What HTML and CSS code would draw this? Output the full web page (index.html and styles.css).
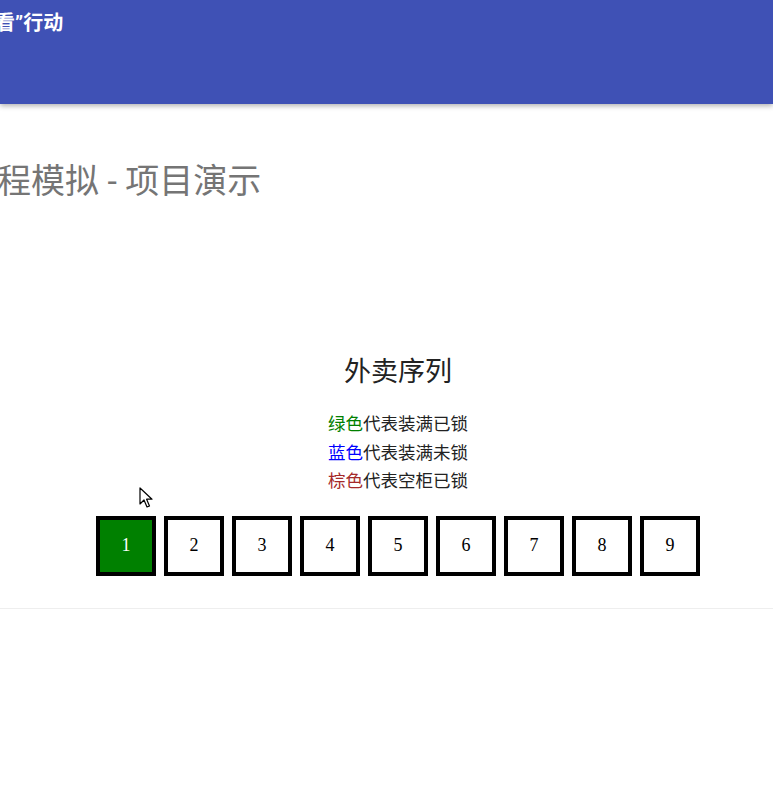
FILE: index.html
```html
<!DOCTYPE html>
<html lang="zh">
<head>
<meta charset="utf-8">
<link rel="stylesheet" href="styles.css">
</head>
<body>
<header class="appbar">
  <div class="appbar-title">“看”行动</div>
</header>
<main class="content">
  <h1 class="page-title">程模拟 - 项目演示</h1>
  <section class="demo">
    <h2 class="demo-title">外卖序列</h2>
    <div class="legend">
      <div><span class="green">绿色</span>代表装满已锁</div>
      <div><span class="blue">蓝色</span>代表装满未锁</div>
      <div><span class="brown">棕色</span>代表空柜已锁</div>
    </div>
    <div class="cells">
      <div class="cell filled">1</div>
      <div class="cell">2</div>
      <div class="cell">3</div>
      <div class="cell">4</div>
      <div class="cell">5</div>
      <div class="cell">6</div>
      <div class="cell">7</div>
      <div class="cell">8</div>
      <div class="cell">9</div>
    </div>
  </section>
  <hr class="divider">
</main>
<svg class="cursor" width="14" height="22" viewBox="0 0 14 22">
  <path d="M1 1 L1 17 L5 13 L8 20 L10.5 19 L7.6 12.2 L13 12.2 Z" fill="#fff" stroke="#000" stroke-width="1.2" stroke-linejoin="round"/>
</svg>
</body>
</html>
```
FILE: styles.css
```css
html, body {
  margin: 0;
  padding: 0;
  overflow: hidden;
  background: #fff;
}
body {
  font-family: "Roboto", "Noto Sans CJK SC", sans-serif;
  position: relative;
  height: 796px;
}
.appbar {
  height: 104px;
  background: #3f51b5;
  box-shadow: 0 2px 5px rgba(0,0,0,0.3);
  position: relative;
  z-index: 1;
}
.appbar-title {
  color: #fff;
  font-size: 20px;
  font-weight: 700;
  line-height: 46px;
  margin-left: -13px;
  white-space: nowrap;
}
.page-title {
  margin: 57px 0 0 -3px;
  font-size: 34px;
  line-height: 40px;
  font-weight: 400;
  color: #757575;
  white-space: nowrap;
}
.demo {
  display: flex;
  flex-direction: column;
  align-items: center;
  padding-left: 23px;
}
.demo-title {
  margin: 155px 0 0;
  font-size: 27px;
  line-height: 33px;
  font-weight: 400;
  color: #222;
}
.legend {
  margin-top: 21px;
  font-size: 17.5px;
  line-height: 28.5px;
  color: #222;
  text-align: center;
}
.green { color: #008000; }
.blue { color: #0000ff; }
.brown { color: #a52a2a; }
.cells {
  display: flex;
  gap: 8px;
  margin-top: 20px;
}
.cell {
  width: 52px;
  height: 52px;
  border: 4px solid #000;
  display: flex;
  align-items: center;
  justify-content: center;
  font-family: "Liberation Serif", "DejaVu Serif", serif;
  font-variant-numeric: oldstyle-nums;
  font-size: 18px;
  color: #000;
}
.cell.filled {
  background: #008000;
  color: #fff;
}
.divider {
  margin: 32px 0 0;
  border: 0;
  border-top: 1px solid #eee;
}
.cursor {
  position: absolute;
  left: 139px;
  top: 487px;
}
```
